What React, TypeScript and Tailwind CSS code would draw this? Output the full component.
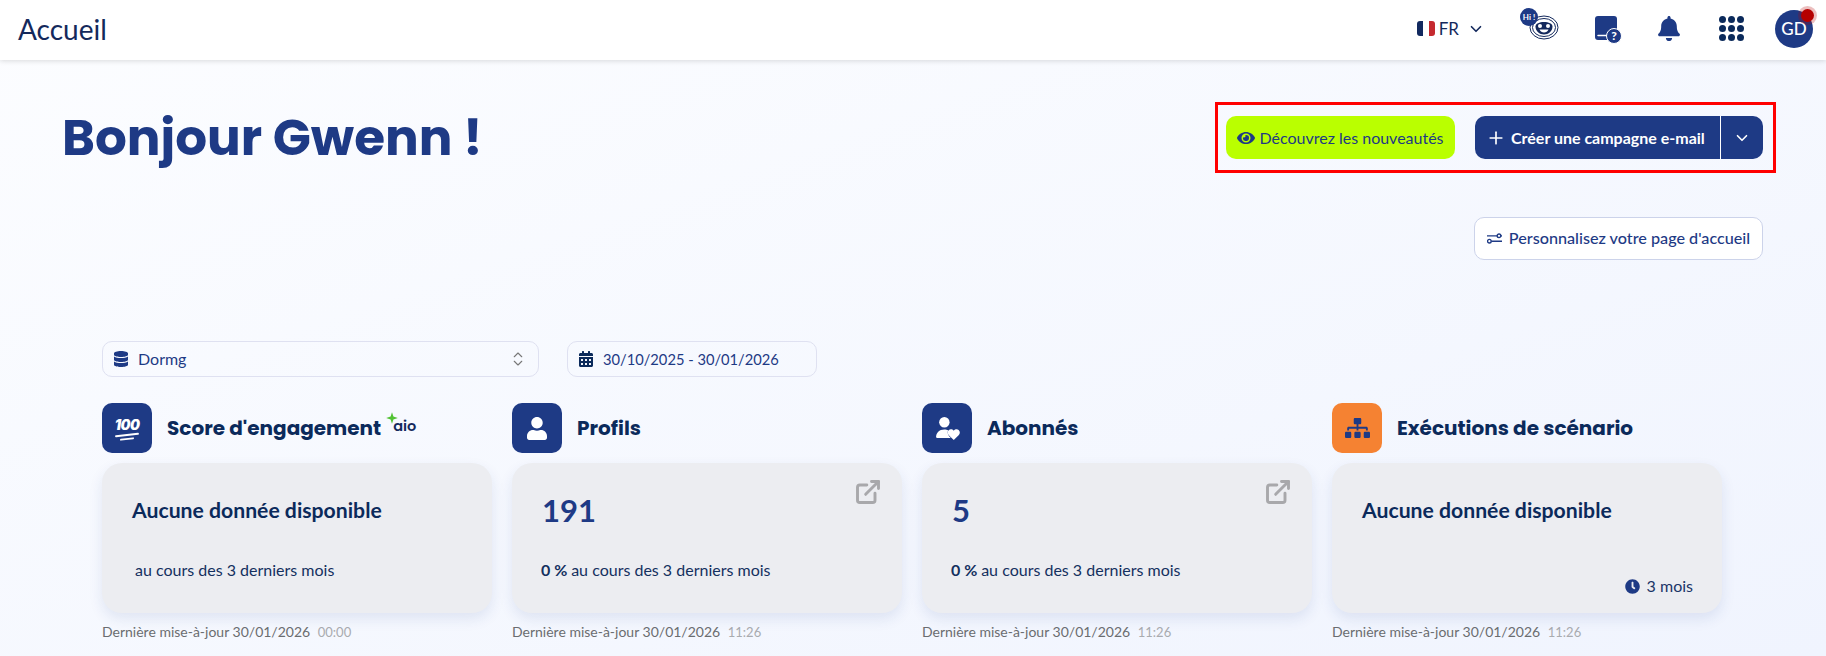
import React from 'react';
import { ChevronDown, ChevronsUpDown, ExternalLink, Plus } from 'lucide-react';
import { FaBell, FaCalendarAlt, FaClock, FaDatabase, FaEye, FaSitemap, FaUser } from 'react-icons/fa';

const BODY = "font-['Lato','Noto_Sans',sans-serif]";

function Flag() {
  return (
    <span className="flex h-[15px] w-[18px] overflow-hidden rounded-[3px]">
      <span className="w-1/3 bg-[#12295f]" />
      <span className="w-1/3 bg-white" />
      <span className="w-1/3 bg-[#c52a2f]" />
    </span>
  );
}

function RobotIcon() {
  return (
    <div className="relative h-[32px] w-[39px]">
      <svg viewBox="0 0 30 25" className="absolute bottom-0 right-0 h-[25px] w-[30px]" fill="none">
        <ellipse cx="15" cy="12.500" rx="14" ry="11.500" stroke="#14295c" strokeWidth="1" />
        <ellipse cx="15" cy="12.500" rx="11.500" ry="9" stroke="#14295c" strokeWidth="1" />
        <path d="M6.500 11.500c0-3 4-4.500 8.500-4.500s8.500 1.500 8.500 4.500c0 4.500-4 8-8.500 8s-8.500-3.500-8.500-8z" fill="#14295c" />
        <circle cx="11" cy="11" r="2" fill="#fff" />
        <circle cx="19" cy="11" r="2" fill="#fff" />
        <path d="M10.500 14.500h9c-.8 2-2.500 3-4.500 3s-3.700-1-4.500-3z" fill="#fff" />
      </svg>
      <span className={`absolute left-0 top-0 flex h-[18px] w-[18px] items-center justify-center rounded-full bg-[#1e3a85] text-[8px] font-bold text-white ${BODY}`}>
        Hi !
      </span>
    </div>
  );
}

function HelpIcon() {
  return (
    <div className="relative h-[27px] w-[26px]">
      <svg viewBox="0 0 22 24" className="absolute left-0 top-0 h-[24px] w-[22px]">
        <path d="M3 0h16a3 3 0 0 1 3 3v18a3 3 0 0 1-3 3H3a3 3 0 0 1-3-3V3a3 3 0 0 1 3-3z" fill="#1e3a85" />
        <path d="M3 19.500h9" stroke="#fff" strokeWidth="1.500" strokeLinecap="round" />
      </svg>
      <span className={`absolute -bottom-[1px] -right-[1px] flex h-[16px] w-[16px] items-center justify-center rounded-full border border-white bg-[#1e3a85] text-[12px] font-black leading-none text-white ${BODY}`}>
        ?
      </span>
    </div>
  );
}

function SubscriberIcon() {
  return (
    <svg viewBox="0 0 24 24" className="h-[25px] w-[25px]" fill="#fff">
      <circle cx="9" cy="6" r="5" />
      <path d="M1 21c0-5 3-8 8-8 1.500 0 2.500.2 3.500.7-1 2.800.2 5.300 2.600 7.300H2c-.6 0-1-.4-1-1z" />
      <path d="M18 23l-4.700-4.500c-1.500-1.500-1.500-3.700 0-5 1.400-1.100 3.400-.8 4.700.6 1.300-1.400 3.300-1.700 4.700-.6 1.500 1.300 1.500 3.500 0 5L18 23z" />
    </svg>
  );
}

function ScoreIcon() {
  return (
    <div className="flex flex-col items-center">
      <span className="text-[14px] font-black italic leading-[15px] tracking-[-0.5px] text-white font-['Inter',sans-serif]">100</span>
      <span className="mt-[2px] h-[2px] w-[24px] -rotate-6 rounded bg-white" />
      <span className="mt-[2px] h-[2px] w-[14px] -rotate-6 rounded bg-white" />
    </div>
  );
}

function SlidersIcon() {
  return (
    <svg viewBox="0 0 14 12" className="h-[13px] w-[15px]" fill="none" stroke="#1e3a85" strokeWidth="1.300">
      <path d="M0 3.500h9.500M13 3.500h1M4 8.500h10M0 8.500h.5" />
      <circle cx="11.200" cy="3.500" r="1.700" />
      <circle cx="2.200" cy="8.500" r="1.700" />
    </svg>
  );
}

function AioBadge() {
  return (
    <span className="relative -mt-[10px] ml-[5px] block h-[22px] w-[30px]">
      <svg viewBox="0 0 12 12" className="absolute -left-[1px] -top-[1px] h-[14px] w-[14px]" fill="#52c234">
        <path d="M6 1l1.200 3.800L11 6 7.200 7.200 6 11 4.800 7.200 1 6l3.800-1.200z" />
      </svg>
      <span className="absolute bottom-[1px] left-[7px] text-[14.500px] font-semibold leading-none text-[#14295c] font-['Poppins','Inter',sans-serif]">aio</span>
    </span>
  );
}

type KpiProps = {
  icon: React.ReactNode;
  iconBg?: string;
  title: string;
  badge?: boolean;
  value?: string;
  percent?: string;
  period?: string;
  months?: boolean;
  link?: boolean;
  time: string;
};

function KpiCard({ icon, iconBg = 'bg-[#1e3a85]', title, badge, value, percent, period, months, link, time }: KpiProps) {
  return (
    <div className="flex w-[390px] flex-col">
      <div className="flex items-center">
        <div className={`flex h-[50px] w-[50px] items-center justify-center rounded-[10px] ${iconBg}`}>{icon}</div>
        <h2 className="ml-[15px] text-[20px] font-bold text-[#0b2a5b] font-['Poppins','Inter',sans-serif]">{title}</h2>
        {badge && <AioBadge />}
      </div>
      <div className="relative mt-[10px] flex h-[150px] flex-col rounded-[20px] bg-[#ecedf1] pl-[30px] shadow-[0_6px_14px_rgba(30,58,133,0.1)]">
        {value ? (
          <p className="mt-[29px] h-[36px] text-[31px] font-bold leading-[36px] text-[#1e3a85]">{value}</p>
        ) : (
          <p className="mt-[34px] h-[31px] text-[21.2px] font-bold leading-[26px] text-[#0b2a5b]">Aucune donnée disponible</p>
        )}
        {period && (
          <p className={`mt-[32px] text-[16px] leading-[20px] text-[#14305f] ${value ? '-ml-[1px]' : 'ml-[3px]'}`}>
            {percent && <b className="font-bold">{percent} </b>}
            {period}
          </p>
        )}
        {months && (
          <div className="absolute bottom-[15px] right-[29px] flex items-center gap-[7px] text-[16px] text-[#1b3568]">
            <FaClock className="h-[15px] w-[15px] text-[#1e3a85]" />3 mois
          </div>
        )}
        {link && <ExternalLink className="absolute right-[20px] top-[15px] h-[28px] w-[28px] text-[#a8a8ab]" strokeWidth={2.5} />}
      </div>
      <p className="mt-[9px] text-[14px] leading-[20px] text-[#6b6d70]">
        Dernière mise-à-jour 30/01/2026 <span className="ml-[4px] text-[13px] text-[#a9abaf]">{time}</span>
      </p>
    </div>
  );
}

export default function App() {
  return (
    <div className={`h-[656px] w-[1826px] overflow-hidden bg-gradient-to-br from-[#fcfdff] to-[#f0f4fe] ${BODY}`}>
      {/* Header */}
      <header className="flex h-[60px] items-center justify-between bg-white pb-[3px] pl-[18px] pr-[13px] shadow-[0_1px_5px_rgba(0,0,0,0.14)]">
        <h1 className="text-[28px] leading-none text-[#14295c]">Accueil</h1>
        <div className="flex items-center">
          <div className="flex items-center text-[17px] text-[#14295c]">
            <Flag />
            <span className="ml-[4px]">FR</span>
            <ChevronDown className="ml-[8px] h-[18px] w-[18px]" strokeWidth={2.2} />
          </div>
          <div className="-mt-[9px] ml-[35px]"><RobotIcon /></div>
          <div className="ml-[36px] mt-[2px]"><HelpIcon /></div>
          <FaBell className="ml-[37px] h-[25px] w-[22px] text-[#1e3a85]" />
          <div className="ml-[39px] grid grid-cols-3 gap-[2px]">
            {[0, 1, 2, 3, 4, 5, 6, 7, 8].map(i => (
              <span key={i} className="h-[7px] w-[7px] rounded-full bg-[#0b2a5b]" />
            ))}
          </div>
          <div className="relative ml-[31px] flex h-[38px] w-[38px] items-center justify-center rounded-full bg-[#1e3a85] text-[17px] font-medium text-white">
            GD
            <span className="absolute -right-[1px] -top-[1px] h-[13px] w-[13px] rounded-full bg-[#b50000] shadow-[0_0_0_3px_rgba(181,0,0,0.25)]" />
          </div>
        </div>
      </header>

      {/* Greeting */}
      <section className="flex items-start justify-between pl-[62px] pr-[50px] pt-[42px]">
        <h2 className="mt-[1px] text-[50px] font-bold leading-[70px] text-[#1e3a85] font-['Poppins','Inter',sans-serif]">Bonjour Gwenn !</h2>
        <div className="flex items-center gap-[20px] border-[3px] border-[#ff0000] py-[11px] pl-[8px] pr-[10px]">
          <button className="flex h-[43px] w-[229px] items-center justify-center gap-[4px] rounded-[10px] bg-[#baff00] text-[16px] text-[#1e3a85]">
            <FaEye className="h-[18px] w-[18px]" />
            Découvrez les nouveautés
          </button>
          <div className="flex h-[43px] w-[288px] items-center rounded-[10px] bg-[#1e3a85] text-white">
            <button className="flex h-full flex-1 items-center gap-[5px] border-r border-white pl-[11px] text-[16px] font-bold">
              <Plus className="h-[20px] w-[20px]" strokeWidth={2} />
              Créer une campagne e-mail
            </button>
            <button className="flex w-[42px] items-center justify-center">
              <ChevronDown className="h-[18px] w-[18px]" strokeWidth={2.2} />
            </button>
          </div>
        </div>
      </section>

      <div className="flex justify-end pr-[63px] pt-[44px]">
        <button className="flex h-[43px] w-[289px] items-center justify-center gap-[7px] rounded-[10px] border border-[#ccd3ea] bg-white text-[16.2px] font-medium text-[#1e3a85]">
          <SlidersIcon />
          Personnalisez votre page d'accueil
        </button>
      </div>

      {/* Filters */}
      <div className="flex gap-[28px] pl-[102px] pt-[81px]">
        <div className="flex h-[36px] w-[437px] items-center rounded-[10px] border border-[#dfe1f1] pl-[10px] pr-[11px] text-[16px] text-[#1e3a85]">
          <FaDatabase className="mr-[9px] h-[16px] w-[16px]" />
          Dormg
          <ChevronsUpDown className="ml-auto h-[18px] w-[18px] text-[#777]" strokeWidth={1.5} />
        </div>
        <div className="flex h-[36px] w-[250px] items-center rounded-[10px] border border-[#dfe1f1] pl-[10px] text-[14.7px] text-[#1e3a85]">
          <FaCalendarAlt className="mr-[9px] h-[16px] w-[16px] text-[#0b2a5b]" />
          30/10/2025 - 30/01/2026
        </div>
      </div>

      {/* KPI cards */}
      <div className="flex gap-[20px] pl-[102px] pt-[26px]">
        <KpiCard icon={<ScoreIcon />} title="Score d'engagement" badge period="au cours des 3 derniers mois" time="00:00" />
        <KpiCard icon={<FaUser className="h-[23px] w-[20px] text-white" />} title="Profils" value="191" percent="0 %" period="au cours des 3 derniers mois" link time="11:26" />
        <KpiCard icon={<SubscriberIcon />} title="Abonnés" value="5" percent="0 %" period="au cours des 3 derniers mois" link time="11:26" />
        <KpiCard icon={<FaSitemap className="h-[22px] w-[25px] text-[#1e3a85]" />} iconBg="bg-[#f58232]" title="Exécutions de scénario" months time="11:26" />
      </div>
    </div>
  );
}
